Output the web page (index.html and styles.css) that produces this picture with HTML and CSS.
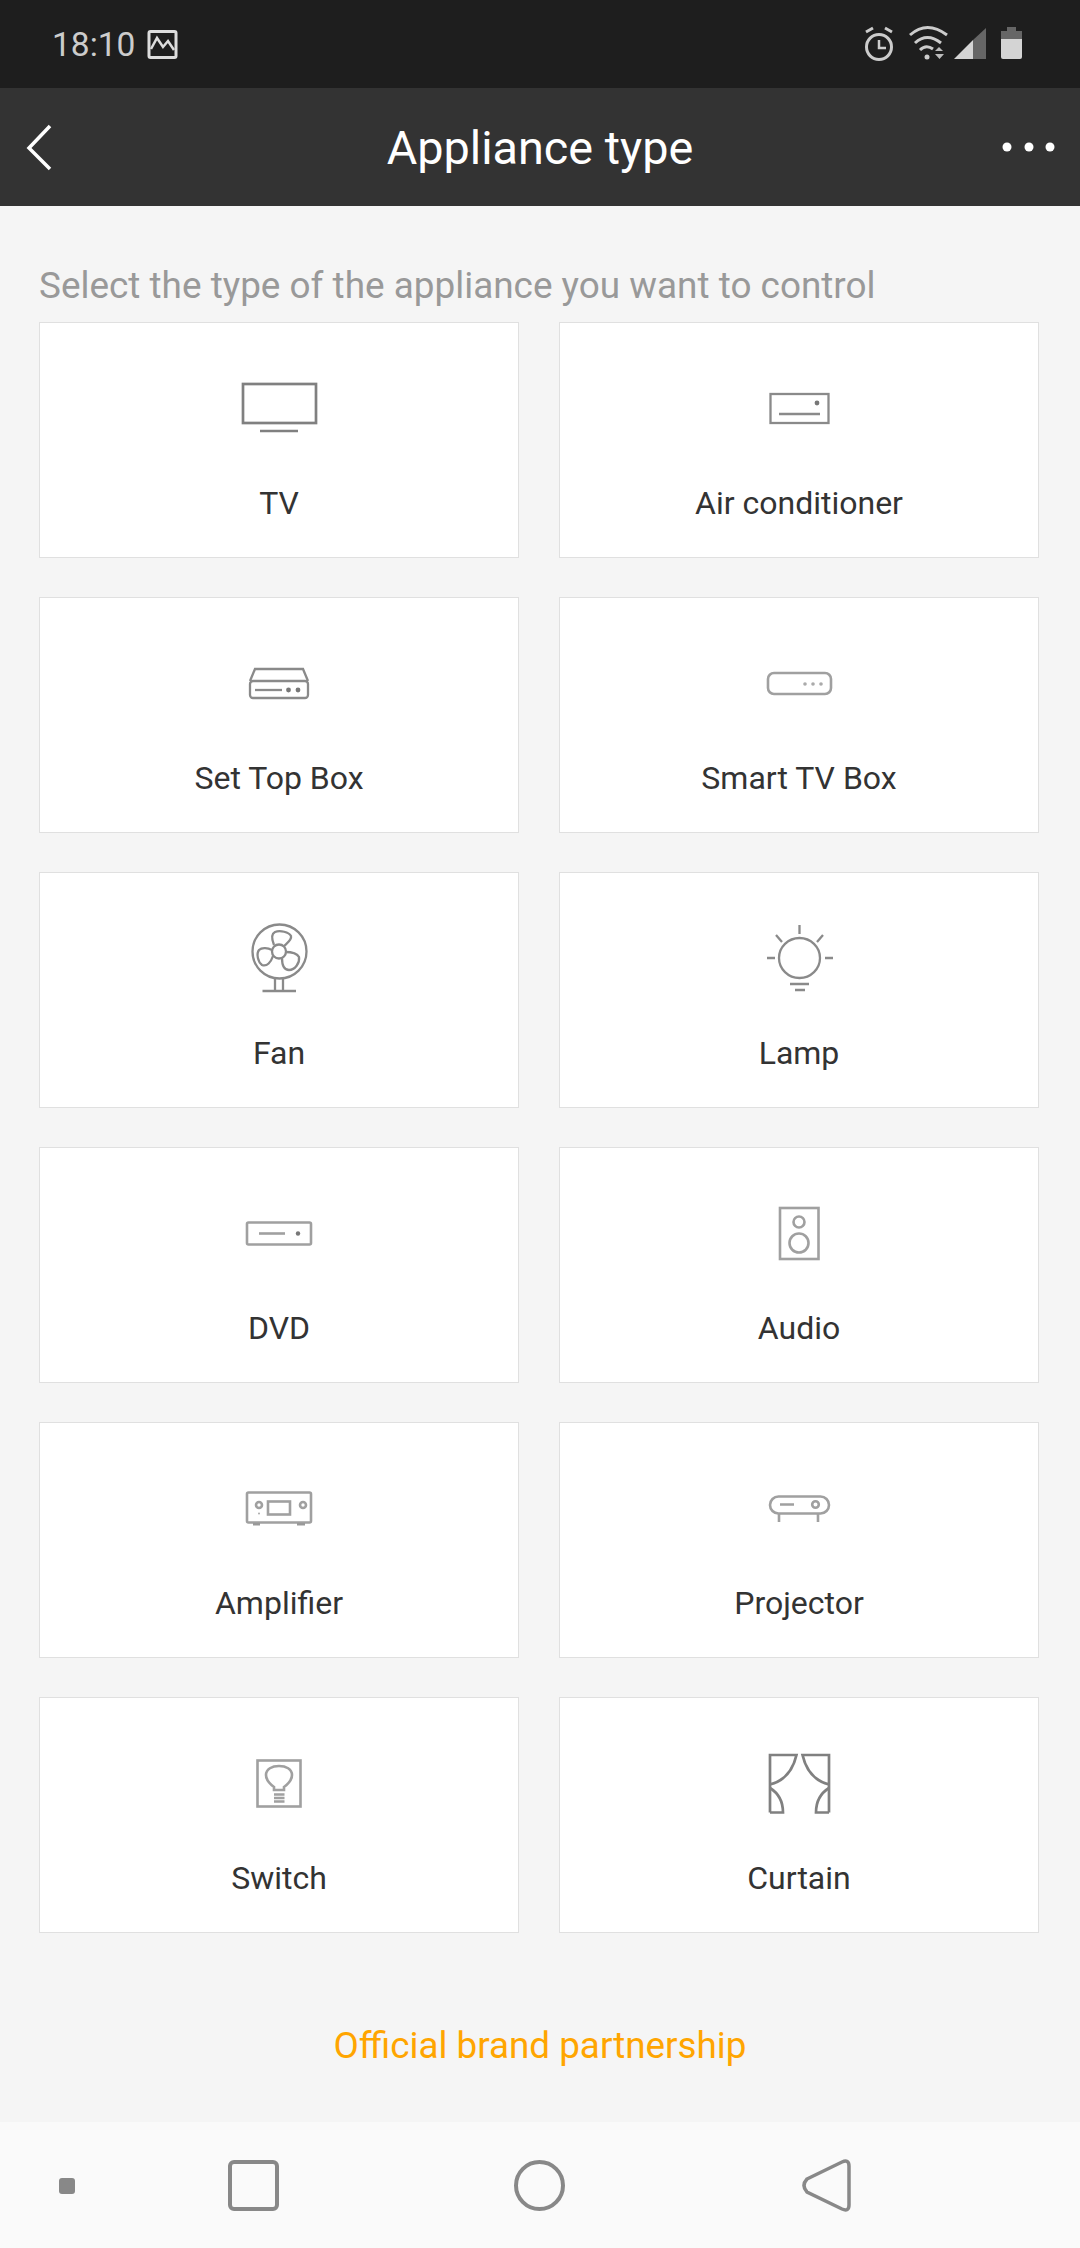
FILE: index.html
```html
<!DOCTYPE html>
<html lang="en">
<head>
<meta charset="utf-8">
<title>Appliance type</title>
<link rel="stylesheet" href="styles.css">
</head>
<body>
<div class="screen">
  <div class="status">
    <div class="status-left">
      <span class="time">18:10</span>
      <svg class="pic" viewBox="148 29 32 32"><rect x="150" y="31.5" width="27" height="26" rx="1.5" fill="none" stroke="#ddd" stroke-width="3"/><path d="M152 49 L158 38 L164 47 L169 41 L175 50" fill="none" stroke="#ddd" stroke-width="2.5"/></svg>
    </div>
    <svg class="status-right" viewBox="860 20 170 50">
      <g fill="none" stroke="#ccc">
        <circle cx="879" cy="48" r="12.5" stroke-width="3"/>
        <path d="M879 41 V49 H886" stroke-width="2.5"/>
        <path d="M866 33 L873 29 M892 33 L885 29" stroke-width="3"/>
        <path d="M910 36 Q927 21 947 36" stroke-width="3"/>
        <path d="M915 44 Q927 33 941 44" stroke-width="3"/>
        <path d="M920 51 Q926 45 933 50" stroke-width="3"/>
      </g>
      <circle cx="927" cy="58" r="2.5" fill="#ccc"/>
      <path d="M935 52 L939 48 L943 52 Z M935 55 H944 L939.5 60 Z" fill="#bbb"/>
      <path d="M954 60 L973 41 V60 Z" fill="#d4d4d4"/>
      <path d="M973 41 L986 29 V60 H973 Z" fill="#666"/>
      <path d="M1007 32 V28 H1016 V32 H1022 V40 H1001 V32 Z" fill="#666"/>
      <path d="M1001 40 H1022 V58 Q1022 60 1020 60 H1003 Q1001 60 1001 58 Z" fill="#d4d4d4"/>
    </svg>
  </div>
  <header class="appbar">
    <svg class="back" viewBox="24 120 32 52"><path d="M50 125 L29 147 L50 168" fill="none" stroke="#fff" stroke-width="3.5"/></svg>
    <h1 class="title">Appliance type</h1>
    <svg class="more" viewBox="1000 140 58 16"><circle cx="1007" cy="148" r="4.5" fill="#fff"/><circle cx="1029" cy="148" r="4.5" fill="#fff"/><circle cx="1050" cy="148" r="4.5" fill="#fff"/></svg>
  </header>
  <main class="content">
    <p class="hint">Select the type of the appliance you want to control</p>
    <div class="grid">
      <a class="card">
        <svg class="icon" viewBox="219 367 120 80"><g class="ln"><rect x="243" y="384" width="73" height="39"/><path d="M260 431 H298"/></g></svg>
        <span class="label">TV</span>
      </a>
      <a class="card">
        <svg class="icon" viewBox="739 367 120 80"><g class="ln thin"><rect x="770.5" y="394" width="58" height="29"/><path d="M779 414 H820"/></g><circle class="dot" cx="817" cy="403" r="2.4"/></svg>
        <span class="label">Air conditioner</span>
      </a>
      <a class="card">
        <svg class="icon" viewBox="219 642 120 80"><g class="ln thin"><path d="M250 681 L255 669 H303 L308 681"/><rect x="250" y="681" width="58" height="17" rx="3"/><path d="M255 690 H282"/></g><circle class="dot" cx="288.5" cy="690" r="2.4"/><circle class="dot" cx="298" cy="690" r="2.4"/></svg>
        <span class="label">Set Top Box</span>
      </a>
      <a class="card">
        <svg class="icon" viewBox="739 642 120 80"><g class="ln pale"><rect x="768" y="673" width="63" height="21" rx="6"/></g><circle class="dot soft" cx="805" cy="684" r="1.8"/><circle class="dot soft" cx="813" cy="684" r="1.8"/><circle class="dot soft" cx="821" cy="684" r="1.8"/></svg>
        <span class="label">Smart TV Box</span>
      </a>
      <a class="card">
        <svg class="icon" viewBox="219 917 120 80"><g class="ln thin"><circle cx="279.5" cy="951.5" r="27"/><circle cx="279" cy="951.5" r="7"/><path d="M274 945 C272 940 271 934 275 932 C280 930 289 932 291 936 C292 940 287 943 284 946"/><path d="M272 950 C268 948 262 947 259 950 C256 954 258 962 262 965 C267 967 271 962 273 956"/><path d="M285 952 C290 952 297 953 299 957 C300 963 295 970 289 970 C284 970 282 965 282 958"/><path d="M275 979 V991 M283 979 V991 M262.5 991 H296"/></g></svg>
        <span class="label">Fan</span>
      </a>
      <a class="card">
        <svg class="icon" viewBox="739 917 120 80"><g class="ln thin"><ellipse cx="799.5" cy="958" rx="20.5" ry="20"/><path d="M799.5 925 V934 M776 935 L782 942 M823 935 L817 942 M767 958 H775 M825 958 H833 M790 984 H809 M795 990 H805"/></g></svg>
        <span class="label">Lamp</span>
      </a>
      <a class="card">
        <svg class="icon" viewBox="219 1192 120 80"><g class="ln pale"><rect x="247" y="1222.5" width="64" height="22" rx="1.5"/><path d="M259 1233.5 H285"/></g><circle class="dot" cx="298" cy="1233.5" r="2.2"/></svg>
        <span class="label">DVD</span>
      </a>
      <a class="card">
        <svg class="icon" viewBox="739 1192 120 80"><g class="ln pale"><rect x="780" y="1208" width="38.5" height="51"/><circle cx="799" cy="1222" r="5.5"/><circle cx="799" cy="1243" r="9.5"/></g></svg>
        <span class="label">Audio</span>
      </a>
      <a class="card">
        <svg class="icon" viewBox="219 1467 120 80"><g class="ln pale"><rect x="247" y="1492.5" width="64" height="30" rx="1.5"/><rect x="268" y="1501.5" width="22" height="13"/><circle cx="259" cy="1505" r="3"/><circle cx="303" cy="1505" r="3"/></g><path class="fill" d="M253 1523 H260 V1525.5 H253 Z M297 1523 H305 V1525.5 H297 Z"/><circle class="dot soft" cx="259" cy="1513.5" r="1"/></svg>
        <span class="label">Amplifier</span>
      </a>
      <a class="card">
        <svg class="icon" viewBox="739 1467 120 80"><g class="ln pale"><rect x="770" y="1496.5" width="59" height="17" rx="8.5"/><path d="M779 1514 V1522 M818 1514 V1522 M780 1504.5 H794"/><circle cx="815.5" cy="1504.5" r="3.3"/></g></svg>
        <span class="label">Projector</span>
      </a>
      <a class="card">
        <svg class="icon" viewBox="219 1742 120 80"><g class="ln pale"><rect x="257.5" y="1760.5" width="43" height="46"/><path d="M274 1787 C270 1784 266 1780 266 1775 C266 1769 272 1766 279 1766 C286 1766 292 1769 292 1775 C292 1780 288 1784 284 1787 V1790 H274 Z M274 1794.5 H284.5 M274 1798 H284.5 M274 1801.5 H284.5"/></g></svg>
        <span class="label">Switch</span>
      </a>
      <a class="card">
        <svg class="icon" viewBox="739 1742 120 80"><g class="ln"><path d="M770 1812.5 V1755 H796.5 C793 1770 784 1781 770 1784.5"/><path d="M770 1788 C778 1793 783 1802 783 1812.5 H770"/><path d="M829 1812.5 V1755 H802.5 C806 1770 815 1781 829 1784.5"/><path d="M829 1788 C821 1793 816 1802 816 1812.5 H829"/></g></svg>
        <span class="label">Curtain</span>
      </a>
    </div>
    <a class="partner">Official brand partnership</a>
  </main>
  <nav class="navbar">
    <span class="nav-dot"></span>
    <span class="nav-square"></span>
    <span class="nav-circle"></span>
    <svg class="nav-back" viewBox="803 2158 50 55"><path d="M808 2179 L843 2162 Q850 2159 850 2166 V2205 Q850 2212 843 2209 L808 2192 Q802 2185.5 808 2179 Z" fill="none" stroke="#888" stroke-width="3.5"/></svg>
  </nav>
</div>
</body>
</html>
```
FILE: styles.css
```css
* { box-sizing: border-box; }
html, body { margin: 0; padding: 0; }
body { width: 1080px; height: 2248px; font-family: Roboto, "Noto Sans", sans-serif; background: #f5f5f5; overflow: hidden; }
.screen { width: 1080px; height: 2248px; display: flex; flex-direction: column; }

.status { height: 88px; background: #1e1e1e; display: flex; align-items: center; justify-content: space-between; padding: 0 50px 0 52px; flex: none; }
.status-left { display: flex; align-items: center; gap: 12px; padding-top: 2px; }
.time { font-size: 33.5px; color: #ccc; line-height: 1; }
.pic { width: 32px; height: 32px; display: block; }
.status-right { width: 170px; height: 50px; display: block; }

.appbar { height: 118px; background: #333; display: flex; align-items: center; justify-content: space-between; padding: 0 22px 0 24px; position: relative; flex: none; }
.back { width: 32px; height: 52px; display: block; }
.more { width: 58px; height: 16px; display: block; }
.title { position: absolute; left: 0; right: 0; top: 30px; text-align: center; margin: 0; font-size: 46.8px; font-weight: 400; color: #fff; line-height: 60px; }

.content { flex: 1; padding: 51px 39px 0 39px; display: flex; flex-direction: column; }
.hint { margin: 0 0 7px; font-size: 36.9px; line-height: 58px; height: 58px; color: #999; white-space: nowrap; }
.grid { display: grid; grid-template-columns: 480px 480px; column-gap: 40px; row-gap: 39px; grid-auto-rows: 236px; }
.card { background: #fff; border: 1.5px solid #e0e0e0; display: flex; flex-direction: column; align-items: center; padding-top: 44px; }
.icon { width: 120px; height: 80px; display: block; flex: none; }
.label { font-size: 32px; line-height: 40px; margin-top: 36px; color: #333; }
.partner { margin-top: 88px; text-align: center; font-size: 36.8px; line-height: 50px; color: #ffa500; }

.ln { fill: none; stroke: #808080; stroke-width: 2.7; }
.ln.thin { stroke: #8a8a8a; stroke-width: 2.3; }
.ln.pale { stroke: #a0a0a0; stroke-width: 2.6; }
.dot { fill: #777; }
.dot.soft { fill: #aaa; }
.fill { fill: #999; }

.navbar { height: 126px; background: #fafafa; flex: none; display: flex; align-items: center; padding: 1px 0 0 59px; }
.nav-dot { width: 16px; height: 16px; border-radius: 3px; background: #888; flex: none; }
.nav-square { width: 51px; height: 51px; border: 4px solid #888; border-radius: 6px; margin-left: 153px; flex: none; }
.nav-circle { width: 51px; height: 51px; border: 4px solid #888; border-radius: 50%; margin-left: 235px; flex: none; }
.nav-back { width: 50px; height: 55px; margin-left: 237px; display: block; flex: none; }
```
